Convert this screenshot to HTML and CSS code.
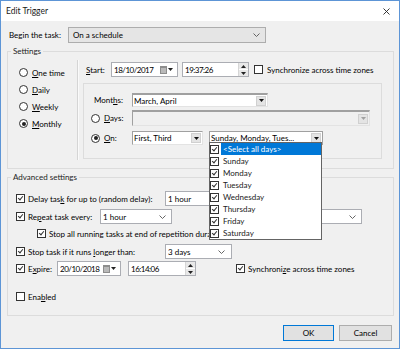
FILE: index.html
```html
<!DOCTYPE html>
<html lang="en">
<head>
  <meta charset="UTF-8">
  <title>Edit Trigger</title>
  <link rel="stylesheet" href="styles.css">
</head>
<body>
  <div class="window">
    <div class="titlebar">
      <span class="title">Edit Trigger</span>
      <svg class="close" width="7" height="7" viewBox="0 0 7 7"><path d="M0.5 0.5L6.5 6.5M6.5 0.5L0.5 6.5" stroke="#222" stroke-width="0.9"/></svg>
    </div>

    <div class="begin-row">
      <span class="begin-label">Begin the task:</span>
      <div class="select select-wide">
        <span>On a schedule</span>
        <svg width="7" height="4" viewBox="0 0 7 4"><polyline points="0.5,0.5 3.5,3.5 6.5,0.5" fill="none" stroke="#555" stroke-width="0.9"/></svg>
      </div>
    </div>

    <fieldset class="group">
      <legend>Settings</legend>
      <div class="settings-body">
        <div class="freq">
          <div class="radio-row"><span class="radio"></span><span><u>O</u>ne time</span></div>
          <div class="radio-row"><span class="radio"></span><span><u>D</u>aily</span></div>
          <div class="radio-row"><span class="radio"></span><span><u>W</u>eekly</span></div>
          <div class="radio-row"><span class="radio on"></span><span><u>M</u>onthly</span></div>
        </div>
        <div class="sep"></div>
        <div class="sched">
          <div class="start-row">
            <span class="start-label"><u>S</u>tart:</span>
            <div class="field date-start">
              <span class="grow num">18/10/2017</span>
              <span class="cal"></span>
              <svg width="5" height="3" viewBox="0 0 5 3"><polygon points="0,0 5,0 2.5,3" fill="#222"/></svg>
            </div>
            <div class="field time-start">
              <span class="grow num">19:37:26</span>
              <span class="spin"><span class="spin-btn"><svg width="5" height="3" viewBox="0 0 5 3"><polygon points="0,3 5,3 2.5,0" fill="#222"/></svg></span><span class="spin-btn"><svg width="5" height="3" viewBox="0 0 5 3"><polygon points="0,0 5,0 2.5,3" fill="#222"/></svg></span></span>
            </div>
            <span class="check sync"></span>
            <span>Synchronize across time zones</span>
          </div>

          <div class="monthly">
            <div class="mrow months-row">
              <span class="mlabel right">Mont<u>h</u>s:</span>
              <div class="cbo cbo-months">
                <span class="grow">March, April</span>
                <span class="dropbtn"><svg width="5" height="3" viewBox="0 0 5 3"><polygon points="0,0 5,0 2.5,3" fill="#111"/></svg></span>
              </div>
            </div>
            <div class="mrow days-row">
              <span class="mlabel"><span class="radio"></span><span><u>D</u>ays:</span></span>
              <div class="cbo cbo-days disabled">
                <span class="grow"></span>
                <span class="dropbtn"><svg width="5" height="3" viewBox="0 0 5 3"><polygon points="0,0 5,0 2.5,3" fill="#a0a0a0"/></svg></span>
              </div>
            </div>
            <div class="mrow on-row">
              <span class="mlabel"><span class="radio on"></span><span><u>O</u>n:</span></span>
              <div class="cbo cbo-first">
                <span class="grow">First, Third</span>
                <span class="dropbtn"><svg width="5" height="3" viewBox="0 0 5 3"><polygon points="0,0 5,0 2.5,3" fill="#111"/></svg></span>
              </div>
              <div class="cbo cbo-weekdays">
                <span class="grow">Sunday, Monday, Tues...</span>
                <span class="dropbtn"><svg width="5" height="3" viewBox="0 0 5 3"><polygon points="0,0 5,0 2.5,3" fill="#111"/></svg></span>
              </div>
            </div>
          </div>
        </div>
      </div>
    </fieldset>

    <fieldset class="group">
      <legend>Advanced settings</legend>
      <div class="adv-body">
        <div class="arow">
          <span class="check on"></span>
          <span class="alabel w137">Delay tas<u>k</u> for up to (random delay):</span>
          <div class="field combo-delay"><span>1 hour</span></div>
        </div>
        <div class="arow gap3">
          <span class="check on"></span>
          <span class="alabel w72">Re<u>p</u>eat task every:</span>
          <div class="field combo-repeat">
            <span class="grow">1 hour</span>
            <svg width="7" height="4" viewBox="0 0 7 4"><polyline points="0.5,0.5 3.5,3.5 6.5,0.5" fill="none" stroke="#555" stroke-width="0.9"/></svg>
          </div>
          <span class="duration-gap"></span>
          <div class="field combo-duration">
            <span class="grow"></span>
            <svg width="7" height="4" viewBox="0 0 7 4"><polyline points="0.5,0.5 3.5,3.5 6.5,0.5" fill="none" stroke="#555" stroke-width="0.9"/></svg>
          </div>
        </div>
        <div class="arow gap2 indent">
          <span class="check on"></span>
          <span>Stop all running tasks at end of repetition duration</span>
        </div>
        <div class="arow gap3">
          <span class="check on"></span>
          <span class="alabel w137">Stop task if it runs <u>l</u>onger than:</span>
          <div class="field combo-stop">
            <span class="grow">3 days</span>
            <svg width="7" height="4" viewBox="0 0 7 4"><polyline points="0.5,0.5 3.5,3.5 6.5,0.5" fill="none" stroke="#555" stroke-width="0.9"/></svg>
          </div>
        </div>
        <div class="arow gap2">
          <span class="check on"></span>
          <span class="alabel w29">E<u>x</u>pire:</span>
          <div class="field date-expire">
            <span class="grow num">20/10/2018</span>
            <span class="cal"></span>
            <svg width="5" height="3" viewBox="0 0 5 3"><polygon points="0,0 5,0 2.5,3" fill="#222"/></svg>
          </div>
          <div class="field time-expire">
            <span class="grow num">16:14:06</span>
            <span class="spin"><span class="spin-btn"><svg width="5" height="3" viewBox="0 0 5 3"><polygon points="0,3 5,3 2.5,0" fill="#222"/></svg></span><span class="spin-btn"><svg width="5" height="3" viewBox="0 0 5 3"><polygon points="0,0 5,0 2.5,3" fill="#222"/></svg></span></span>
          </div>
          <span class="check on sync-expire"></span>
          <span>Synchroni<u>z</u>e across time zones</span>
        </div>
        <div class="arow enabled-row">
          <span class="check"></span>
          <span>Ena<u>b</u>led</span>
        </div>
      </div>
    </fieldset>

    <div class="buttons">
      <button class="btn default">OK</button>
      <button class="btn cancel">Cancel</button>
    </div>

    <!-- open list of the weekday checked combo -->
    <div class="droplist">
      <div class="item"><span class="check on"></span><span class="item-text selected">&lt;Select all days&gt;</span></div>
      <div class="item"><span class="check on"></span><span class="item-text">Sunday</span></div>
      <div class="item"><span class="check on"></span><span class="item-text">Monday</span></div>
      <div class="item"><span class="check on"></span><span class="item-text">Tuesday</span></div>
      <div class="item"><span class="check on"></span><span class="item-text">Wednesday</span></div>
      <div class="item"><span class="check on"></span><span class="item-text">Thursday</span></div>
      <div class="item"><span class="check on"></span><span class="item-text">Friday</span></div>
      <div class="item"><span class="check on"></span><span class="item-text">Saturday</span></div>
    </div>
  </div>
</body>
</html>
```

FILE: styles.css
```css
* {
  box-sizing: border-box;
}
body {
  margin: 0;
  font-family: Lato, "Noto Sans", sans-serif;
  font-size: 8px;
  color: #000;
  background: #fff;
}
u {
  text-decoration-thickness: 1px;
  text-underline-offset: 1px;
}
.grow {
  flex: 1;
  overflow: hidden;
  white-space: nowrap;
}
.num {
  letter-spacing: -0.5px;
}

.window {
  position: relative;
  width: 400px;
  height: 349px;
  border: 1px solid #5d95d6;
  background: #f0f0f0;
  overflow: hidden;
}
.titlebar {
  height: 20px;
  background: #fff;
  display: flex;
  align-items: center;
  justify-content: space-between;
  padding: 0 9px 0 5px;
}
.title {
  font-size: 8.5px;
  color: #1a1a1a;
}

/* begin the task */
.begin-row {
  display: flex;
  align-items: center;
  height: 16px;
  margin-top: 6px;
  padding-left: 8px;
}
.begin-label {
  width: 59px;
}
.select {
  display: flex;
  align-items: center;
  justify-content: space-between;
  height: 16px;
  border: 1px solid #adadad;
  background: #e5e5e5;
  padding: 0 5px 0 4px;
}
.select-wide {
  width: 198px;
}

/* group boxes */
.group {
  margin: 3px 0 0 6px;
  width: 387px;
  padding: 0;
  border: 1px solid #dcdcdc;
  min-width: 0;
}
.group legend {
  margin-left: 3px;
  padding: 0 2px;
  height: 10px;
  line-height: 10px;
  color: #1e1e1e;
}

/* radio + checkbox */
.radio {
  display: inline-block;
  width: 9px;
  height: 9px;
  border: 1px solid #333;
  border-radius: 50%;
  background: #fff;
  position: relative;
  flex: none;
}
.radio.on::after {
  content: "";
  position: absolute;
  left: 1.5px;
  top: 1.5px;
  width: 4px;
  height: 4px;
  border-radius: 50%;
  background: #222;
}
.check {
  display: inline-block;
  width: 9px;
  height: 9px;
  border: 1px solid #333;
  background: #fff;
  position: relative;
  flex: none;
  margin-right: 3px;
}
.check.on::after {
  content: "";
  position: absolute;
  left: 2px;
  top: 0px;
  width: 2px;
  height: 4px;
  border: solid #333;
  border-width: 0 1px 1px 0;
  transform: rotate(40deg);
}

/* settings */
.settings-body {
  display: flex;
  height: 112px;
  padding-top: 4px;
}
.freq {
  width: 69px;
  padding-top: 4px;
}
.radio-row {
  display: flex;
  align-items: center;
  height: 17px;
  padding-left: 11px;
}
.radio-row .radio {
  margin-right: 4px;
}
.sep {
  width: 1px;
  height: 100px;
  background: #d5d5d5;
  box-shadow: 1px 0 #fafafa;
}
.sched {
  flex: 1;
  padding-top: 2px;
}
.start-row {
  display: flex;
  align-items: center;
  height: 15px;
  padding-left: 8px;
}
.start-label {
  width: 25px;
}

.field {
  display: flex;
  align-items: center;
  height: 15px;
  background: #fff;
  border: 1px solid #abadb3;
  padding: 0 4px 0 2px;
  white-space: nowrap;
  flex: none;
}
.date-start {
  width: 67px;
}
.time-start {
  width: 67px;
  margin-left: 4px;
  padding-right: 0;
}
.sync {
  margin-left: 5px;
  margin-right: 4px;
}
.cal {
  width: 7px;
  height: 8px;
  margin-right: 1px;
  background: #b9b9b9;
  border: 1px solid #8d8d8d;
  border-top-width: 2px;
}
.spin {
  display: flex;
  flex-direction: column;
  width: 10px;
  height: 13px;
  border-left: 1px solid #d6d6d6;
}
.spin-btn {
  flex: 1;
  display: flex;
  align-items: center;
  justify-content: center;
  background: #e8e8e8;
}
.spin-btn + .spin-btn {
  border-top: 1px solid #fff;
}

/* monthly panel */
.monthly {
  margin: 6px 0 0 5px;
  width: 299px;
  height: 76px;
  border: 1px solid #dcdcdc;
  padding-top: 9px;
}
.mrow {
  display: flex;
  align-items: center;
}
.months-row {
  height: 14px;
}
.days-row {
  height: 16px;
  margin-top: 3px;
}
.on-row {
  height: 14px;
  margin-top: 5px;
}
.mlabel {
  width: 48px;
  display: flex;
  align-items: center;
  padding-left: 7px;
}
.mlabel .radio {
  margin-right: 4px;
}
.mlabel.right {
  justify-content: flex-end;
  padding-right: 9px;
}
.cbo {
  display: flex;
  align-items: center;
  height: 100%;
  background: #fff;
  border: 1px solid;
  border-color: #a0a0a0 #e3e3e3 #e3e3e3 #a0a0a0;
  padding-left: 1px;
  flex: none;
}
.cbo-months,
.cbo-days {
  border-top: 2px solid #a0a0a0;
}
.cbo-months {
  width: 136px;
}
.cbo-days {
  width: 238px;
}
.cbo.disabled {
  background: #f0f0f0;
}
.cbo-first {
  width: 71px;
}
.cbo-weekdays {
  width: 114px;
  margin-left: 6px;
  border-color: #a0a0a0;
}
.dropbtn {
  display: flex;
  align-items: center;
  justify-content: center;
  width: 10px;
  height: 10px;
  margin-right: 1px;
  background: #e4e4e4;
  border: 1px solid #d0d0d0;
}

/* advanced settings */
.adv-body {
  padding: 9px 0 11px 8px;
}
.arow {
  display: flex;
  align-items: center;
  height: 15px;
  white-space: nowrap;
}
.gap2 {
  margin-top: 2px;
}
.gap3 {
  margin-top: 3px;
}
.indent {
  padding-left: 21px;
}
.enabled-row {
  margin-top: 13px;
}
.alabel {
  flex: none;
}
.w137 {
  width: 137px;
}
.w72 {
  width: 72px;
}
.w29 {
  width: 29px;
}
.combo-delay {
  width: 100px;
}
.combo-repeat {
  width: 72px;
  padding-right: 5px;
}
.duration-gap {
  width: 118px;
}
.combo-duration {
  width: 72px;
  padding-right: 5px;
}
.combo-stop {
  width: 67px;
  padding-right: 6px;
}
.date-expire {
  width: 64px;
}
.time-expire {
  width: 68px;
  margin-left: 7px;
  padding-right: 0;
}
.sync-expire {
  margin-left: 40px;
}

/* buttons */
.buttons {
  display: flex;
  justify-content: flex-end;
  gap: 5px;
  margin-top: 9px;
  padding-right: 7px;
}
.btn {
  height: 16px;
  font-family: inherit;
  font-size: 8px;
  color: #000;
  background: #e1e1e1;
  border: 1px solid #adadad;
  padding: 0;
}
.btn.default {
  width: 51px;
  border-color: #0078d7;
}
.btn.cancel {
  width: 53px;
}

/* open list */
.droplist {
  position: absolute;
  left: 208px;
  top: 141px;
  width: 113px;
  height: 98px;
  background: #fff;
  border: 1px solid #646464;
}
.item {
  display: flex;
  align-items: center;
  height: 12px;
}
.item .check {
  margin: 0 2px 0 0;
}
.item-text {
  flex: 1;
  height: 12px;
  line-height: 12px;
  padding-left: 2px;
  color: #222;
}
.item-text.selected {
  background: #0078d7;
  color: #fff;
}
```
